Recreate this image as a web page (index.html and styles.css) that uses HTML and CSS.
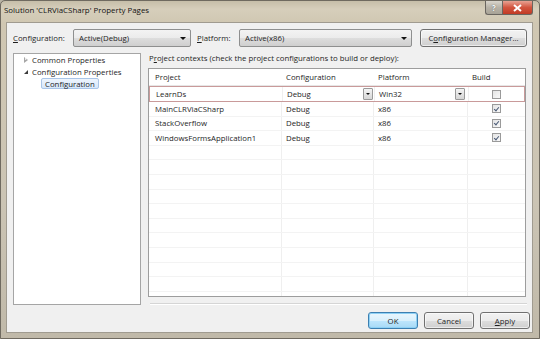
FILE: index.html
```html
<!DOCTYPE html>
<html lang="en">
<head>
    <meta charset="UTF-8">
    <title>Solution 'CLRViaCSharp' Property Pages</title>
    <link rel="stylesheet" href="styles.css">
</head>
<body>
    <div class="window">
        <div class="titlebar">
            <span class="title">Solution 'CLRViaCSharp' Property Pages</span>
            <div class="caption-buttons">
                <span class="cap help">?</span>
                <span class="cap close">
                    <svg width="9" height="8" viewBox="0 0 9 8"><path d="M1 1 L8 7 M8 1 L1 7" stroke="#fff" stroke-width="2"/></svg>
                </span>
            </div>
        </div>

        <div class="client">
            <div class="toolbar">
                <span class="label label-config"><u>C</u>onfiguration:</span>
                <div class="combo combo-config"><span>Active(Debug)</span><span class="arrow"></span></div>
                <span class="label label-platform"><u>P</u>latform:</span>
                <div class="combo combo-platform"><span>Active(x86)</span><span class="arrow"></span></div>
                <button class="btn btn-manager">C<u>o</u>nfiguration Manager...</button>
            </div>

            <div class="main">
                <div class="tree">
                    <div class="tree-item"><span class="twisty closed"></span>Common Properties</div>
                    <div class="tree-item"><span class="twisty open"></span>Configuration Properties</div>
                    <div class="tree-item child"><span class="selected">Configuration</span></div>
                </div>

                <div class="contexts">
                    <div class="contexts-label">P<u>r</u>oject contexts (check the project configurations to build or deploy):</div>
                    <div class="grid">
                        <div class="row header">
                            <div class="cell">Project</div>
                            <div class="cell">Configuration</div>
                            <div class="cell">Platform</div>
                            <div class="cell">Build</div>
                        </div>
                        <div class="row current">
                            <div class="cell first">LearnDs</div>
                            <div class="cell">Debug<span class="drop"></span></div>
                            <div class="cell">Win32<span class="drop"></span></div>
                            <div class="cell check-cell"><span class="check"></span></div>
                        </div>
                        <div class="row">
                            <div class="cell first">MainCLRViaCSharp</div>
                            <div class="cell">Debug</div>
                            <div class="cell">x86</div>
                            <div class="cell check-cell"><span class="check on"></span></div>
                        </div>
                        <div class="row">
                            <div class="cell first">StackOverflow</div>
                            <div class="cell">Debug</div>
                            <div class="cell">x86</div>
                            <div class="cell check-cell"><span class="check on"></span></div>
                        </div>
                        <div class="row">
                            <div class="cell first">WindowsFormsApplication1</div>
                            <div class="cell">Debug</div>
                            <div class="cell">x86</div>
                            <div class="cell check-cell"><span class="check on"></span></div>
                        </div>
                        <div class="row empty"><div class="cell"></div><div class="cell"></div><div class="cell"></div><div class="cell"></div></div>
                        <div class="row empty"><div class="cell"></div><div class="cell"></div><div class="cell"></div><div class="cell"></div></div>
                        <div class="row empty"><div class="cell"></div><div class="cell"></div><div class="cell"></div><div class="cell"></div></div>
                        <div class="row empty"><div class="cell"></div><div class="cell"></div><div class="cell"></div><div class="cell"></div></div>
                        <div class="row empty"><div class="cell"></div><div class="cell"></div><div class="cell"></div><div class="cell"></div></div>
                        <div class="row empty"><div class="cell"></div><div class="cell"></div><div class="cell"></div><div class="cell"></div></div>
                        <div class="row empty"><div class="cell"></div><div class="cell"></div><div class="cell"></div><div class="cell"></div></div>
                        <div class="row empty"><div class="cell"></div><div class="cell"></div><div class="cell"></div><div class="cell"></div></div>
                        <div class="row empty"><div class="cell"></div><div class="cell"></div><div class="cell"></div><div class="cell"></div></div>
                        <div class="row empty"><div class="cell"></div><div class="cell"></div><div class="cell"></div><div class="cell"></div></div>
                        <div class="row empty"><div class="cell"></div><div class="cell"></div><div class="cell"></div><div class="cell"></div></div>
                    </div>
                    <div class="separator"></div>
                </div>
            </div>

            <div class="footer">
                <button class="btn btn-default">OK</button>
                <button class="btn">Cancel</button>
                <button class="btn"><u>A</u>pply</button>
            </div>
        </div>
    </div>
</body>
</html>
```

FILE: styles.css
```css
* {
    margin: 0;
    padding: 0;
    box-sizing: border-box;
}

body {
    width: 540px;
    height: 339px;
    overflow: hidden;
    font-family: 'Open Sans', 'Liberation Sans', sans-serif;
    font-size: 7.8px;
    color: #1e1e1e;
    background-color: #b9b3a4;
}

u {
    text-decoration: underline;
    text-underline-offset: 1px;
}

.window {
    width: 540px;
    height: 339px;
    border: 1px solid #6f6a60;
    border-radius: 5px 5px 0 0;
    background: linear-gradient(180deg, #c6bea9 0px, #d6cebb 8px, #d0c7b2 22px, #cbc4b4 60%, #c0b9a9 100%);
}

.titlebar {
    height: 21px;
    display: flex;
    align-items: flex-start;
    padding-left: 3px;
}

.title {
    margin-top: 4px;
    font-size: 7.9px;
    color: #111;
}

.caption-buttons {
    margin-left: auto;
    margin-right: 6px;
    display: flex;
}

.cap {
    height: 14px;
    display: flex;
    align-items: center;
    justify-content: center;
    border: 1px solid #6a6660;
    border-top: none;
}

.help {
    width: 17px;
    border-radius: 0 0 0 3px;
    border-right: none;
    background: linear-gradient(180deg, #d9d5cc, #b7b2a7 50%, #a8a397);
    color: #fff;
    font-weight: bold;
    font-size: 8px;
    text-shadow: 0 0 1px #444;
}

.close {
    width: 31px;
    border-radius: 0 0 3px 0;
    background: linear-gradient(180deg, #e8a293, #d2553f 50%, #c13b25);
}

.client {
    margin-left: 5px;
    width: 527px;
    height: 311px;
    border: 1px solid #a09b90;
    background-color: #f0f0f0;
    padding: 0 5px 0 6px;
}

/* top row */
.toolbar {
    margin-top: 6px;
    height: 18px;
    display: flex;
    align-items: center;
}

.label-config {
    width: 60px;
}

.label-platform {
    margin-left: 6px;
    width: 42px;
}

.combo {
    height: 18px;
    display: flex;
    align-items: center;
    justify-content: space-between;
    padding: 0 4px 0 5px;
    border: 1px solid #8e8f8f;
    border-radius: 2px;
    background: linear-gradient(180deg, #f3f3f3 0%, #ebebeb 50%, #dddddd 51%, #cfcfcf 100%);
}

.combo-config {
    width: 118px;
}

.combo-platform {
    width: 173px;
}

.arrow {
    width: 0;
    height: 0;
    border-left: 3px solid transparent;
    border-right: 3px solid transparent;
    border-top: 3px solid #111;
}

.btn {
    font-family: inherit;
    font-size: inherit;
    color: #1e1e1e;
    height: 17px;
    border: 1px solid #707070;
    border-radius: 3px;
    background: linear-gradient(180deg, #f2f2f2 0%, #ebebeb 50%, #dddddd 51%, #cfcfcf 100%);
    box-shadow: inset 0 0 0 1px rgba(255, 255, 255, 0.6);
}

.btn-manager {
    margin-left: 8px;
    width: 107px;
    height: 18px;
}

/* tree + grid */
.main {
    margin-top: 6px;
    height: 253px;
    display: flex;
}

.tree {
    width: 128px;
    height: 252px;
    border: 1px solid #a5a5a5;
    background-color: #fff;
    padding-top: 0;
}

.tree-item {
    height: 12.2px;
    line-height: 12px;
    display: flex;
    align-items: center;
    padding-left: 9px;
    white-space: nowrap;
}

.tree-item:first-child {
    margin-top: -0.5px;
}

.twisty {
    width: 8px;
    height: 8px;
    margin-right: 1px;
    position: relative;
}

.twisty.closed::before {
    content: '';
    position: absolute;
    left: 1px;
    top: 1px;
    border-left: 4px solid #a6a6a6;
    border-top: 3px solid transparent;
    border-bottom: 3px solid transparent;
}

.twisty.closed::after {
    content: '';
    position: absolute;
    left: 2px;
    top: 2.5px;
    border-left: 2px solid #fff;
    border-top: 1.5px solid transparent;
    border-bottom: 1.5px solid transparent;
}

.twisty.open::before {
    content: '';
    position: absolute;
    left: 1px;
    top: 2px;
    border-right: 4px solid #3c3c3c;
    border-top: 4px solid transparent;
}

.tree-item.child {
    padding-left: 27px;
}

.selected {
    display: block;
    height: 11px;
    line-height: 10px;
    padding: 0 3px;
    border: 1px solid #a9c5e8;
    border-radius: 2px;
    background: linear-gradient(180deg, #eef5fd, #d6e7fb);
}

.contexts {
    margin-left: 7px;
    width: 379px;
}

.contexts-label {
    height: 12px;
    line-height: 11px;
    padding-left: 1px;
}

.grid {
    margin-top: 3px;
    width: 378px;
    height: 229px;
    border: 1px solid #9d9d9d;
    background-color: #fff;
    overflow: hidden;
}

.row {
    display: grid;
    grid-template-columns: 133px 92px 94px 1fr;
    height: 14.6px;
    border-bottom: 1px solid #f3f3f3;
}

.row .cell {
    display: flex;
    align-items: center;
    justify-content: space-between;
    padding-left: 4px;
    padding-right: 1px;
    border-right: 1px solid #efefef;
    white-space: nowrap;
}

.row .cell:last-child {
    border-right: none;
}

.row .cell.first {
    padding-left: 6px;
}

.row.header {
    height: 17px;
    border-bottom: 1px solid #e6e6e6;
}

.row.header .cell {
    border-right: none;
}

.row.header .cell:first-child {
    padding-left: 6px;
}

.row.current {
    height: 16px;
    border: 1px solid #c99a9a;
}

.drop {
    width: 10px;
    height: 12px;
    border: 1px solid #9a9a9a;
    border-radius: 1px;
    background: linear-gradient(180deg, #f4f4f4, #d6d6d6);
    display: flex;
    align-items: center;
    justify-content: center;
}

.drop::after {
    content: '';
    border-left: 2.5px solid transparent;
    border-right: 2.5px solid transparent;
    border-top: 2.5px solid #111;
}

.row.current .cell:nth-child(3) .drop {
    margin-right: 2px;
}

.check-cell {
    justify-content: center !important;
    padding-left: 0 !important;
}

.check {
    width: 9px;
    height: 9px;
    border: 1px solid #9a9a9a;
    background: linear-gradient(135deg, #e4e4e4, #f8f8f8);
    display: flex;
    align-items: center;
    justify-content: center;
}

.check.on::after {
    content: '';
    width: 2px;
    height: 4px;
    margin-top: -1px;
    border-right: 1px solid #4a5a76;
    border-bottom: 1px solid #4a5a76;
    transform: rotate(40deg);
}

.separator {
    margin-top: 6px;
    margin-left: 2px;
    width: 377px;
    height: 2px;
    border-top: 1px solid #d5d5d5;
    border-bottom: 1px solid #fff;
}

/* bottom buttons */
.footer {
    margin-top: 6px;
    margin-right: -3px;
    display: flex;
    justify-content: flex-end;
    gap: 6px;
}

.footer .btn {
    width: 50px;
}

.btn-default {
    border-color: #3c7fb1;
    background: linear-gradient(180deg, #eaf6fd 0%, #d9f0fc 50%, #bee6fd 51%, #a7d9f5 100%);
    box-shadow: inset 0 0 0 1px #8ed1f5;
}
```
